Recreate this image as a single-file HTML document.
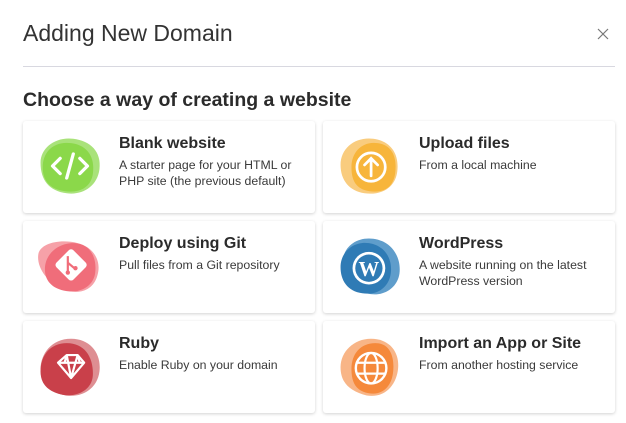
<!DOCTYPE html>
<html><head><style>
*{margin:0;padding:0;box-sizing:border-box}
body{width:626px;height:423px;background:#fff;font-family:"Liberation Sans",sans-serif;color:#2b2b2b;position:relative;overflow:hidden}
.t{position:absolute;left:23px;top:20px;font-size:23px;color:#333}
.x{position:absolute;left:597px;top:28px}
.hr{position:absolute;left:23px;top:66px;width:592px;height:1px;background:#d8d8e0}
.h{position:absolute;left:23px;top:89px;font-size:19.5px;font-weight:bold;color:#2b2b2b}
.c{position:absolute;width:292px;height:92px;background:#fff;border-radius:3px;box-shadow:0 1px 3px rgba(0,0,0,.18)}
.c svg{position:absolute;left:11px;top:9px}
.c b{position:absolute;left:96px;top:14px;font-size:16px;color:#2b2b2b}
.c p{position:absolute;left:96px;top:36px;font-size:12.3px;line-height:16px;color:#3a3a3a;width:190px}
</style></head><body>
<div class="t">Adding New Domain</div>
<svg class="x" width="12" height="12" viewBox="0 0 12 12"><path d="M1 1l10 10M11 1L1 11" stroke="#777" stroke-width="1.2"/></svg>
<div class="hr"></div>
<div class="h">Choose a way of creating a website</div>

<div class="c" style="left:23px;top:121px">
<svg width="72" height="72" viewBox="0 0 66 66"><path d="M6 30C6 16 20 6 36 8 52 10 62 20 60 36 58 52 44 60 30 58 14 56 6 46 6 30Z" fill="#a9e27a"/><path d="M8 34C8 20 18 10 34 12 50 14 56 26 54 40 52 54 40 58 28 56 14 54 8 46 8 34Z" fill="#8bd84a"/><path d="M24 26l-7 7 7 7M42 26l7 7-7 7M36 22l-6 22" stroke="#fff" stroke-width="3" fill="none" stroke-linecap="round" stroke-linejoin="round"/></svg>
<b>Blank website</b><p>A starter page for your HTML or PHP site (the previous default)</p></div>

<div class="c" style="left:323px;top:121px">
<svg width="72" height="72" viewBox="0 0 66 66"><path d="M6 32C6 16 20 6 36 8 52 10 60 22 58 38 56 54 42 60 28 58 14 56 6 46 6 32Z" fill="#f9cc7e"/><path d="M16 34C16 20 26 10 40 12 54 14 58 26 56 40 54 54 44 58 32 56 20 54 16 46 16 34Z" fill="#f7b53b"/><circle cx="34" cy="34" r="13" stroke="#fff" stroke-width="2.5" fill="none"/><path d="M34 42V27M28 32l6-6 6 6" stroke="#fff" stroke-width="2.5" fill="none" stroke-linecap="round"/></svg>
<b>Upload files</b><p>From a local machine</p></div>

<div class="c" style="left:23px;top:221px">
<svg width="72" height="72" viewBox="0 0 66 66"><path d="M4 22C6 12 24 8 40 12 56 16 62 30 58 42 54 56 40 60 26 54 12 48 2 34 4 22Z" fill="#f6a1a8"/><path d="M10 36C10 22 22 12 36 12 52 12 58 26 56 40 54 52 42 58 30 56 16 54 10 46 10 36Z" fill="#f06d7a"/><rect x="23" y="21" width="22" height="22" rx="3" transform="rotate(45 34 32)" fill="#fff"/><path d="M31 24v16M31 30l6 5" stroke="#f06d7a" stroke-width="2" fill="none"/><circle cx="31" cy="39" r="2" fill="#f06d7a"/><circle cx="38" cy="35" r="2" fill="#f06d7a"/></svg>
<b>Deploy using Git</b><p>Pull files from a Git repository</p></div>

<div class="c" style="left:323px;top:221px">
<svg width="72" height="72" viewBox="0 0 66 66"><path d="M8 30C8 16 20 6 36 8 52 10 62 24 60 40 58 54 44 62 30 58 16 54 8 44 8 30Z" fill="#5f9dcb"/><path d="M6 34C6 20 18 10 32 12 46 14 54 26 52 40 50 54 38 60 26 58 12 56 6 46 6 34Z" fill="#2f7bb5"/><circle cx="32" cy="35" r="15" fill="#fff"/><circle cx="32" cy="35" r="12.5" fill="#2f7bb5"/><text x="32" y="42" font-family="Liberation Serif,serif" font-weight="bold" font-size="19" fill="#fff" text-anchor="middle">W</text></svg>
<b>WordPress</b><p>A website running on the latest WordPress version</p></div>

<div class="c" style="left:23px;top:321px">
<svg width="72" height="72" viewBox="0 0 66 66"><path d="M6 36C6 22 16 8 34 8 52 8 62 22 60 38 58 54 44 62 30 60 14 58 6 50 6 36Z" fill="#de8e92"/><path d="M6 38C6 22 16 12 30 12 46 12 54 24 54 40 54 54 42 60 30 60 16 58 6 52 6 38Z" fill="#c9404a"/><path d="M22 30l8-7h10l6 7-12 14z M22 30h24M30 23l4 21M40 23l-6 21M30 23l-2 7M40 23l2 7" stroke="#fff" stroke-width="2" fill="none" stroke-linejoin="round"/></svg>
<b>Ruby</b><p>Enable Ruby on your domain</p></div>

<div class="c" style="left:323px;top:321px">
<svg width="72" height="72" viewBox="0 0 66 66"><path d="M6 34C6 20 18 8 34 8 52 8 62 22 58 40 54 56 42 62 30 60 14 56 6 48 6 34Z" fill="#f8b587"/><path d="M16 36C16 22 24 12 38 12 52 12 56 26 54 40 52 54 42 60 32 58 20 56 16 48 16 36Z" fill="#f5893b"/><circle cx="34" cy="35" r="14" stroke="#fff" stroke-width="2.2" fill="none"/><ellipse cx="34" cy="35" rx="6" ry="14" stroke="#fff" stroke-width="2" fill="none"/><path d="M21 30h26M21 40h26" stroke="#fff" stroke-width="2"/></svg>
<b>Import an App or Site</b><p>From another hosting service</p></div>
</body></html>
